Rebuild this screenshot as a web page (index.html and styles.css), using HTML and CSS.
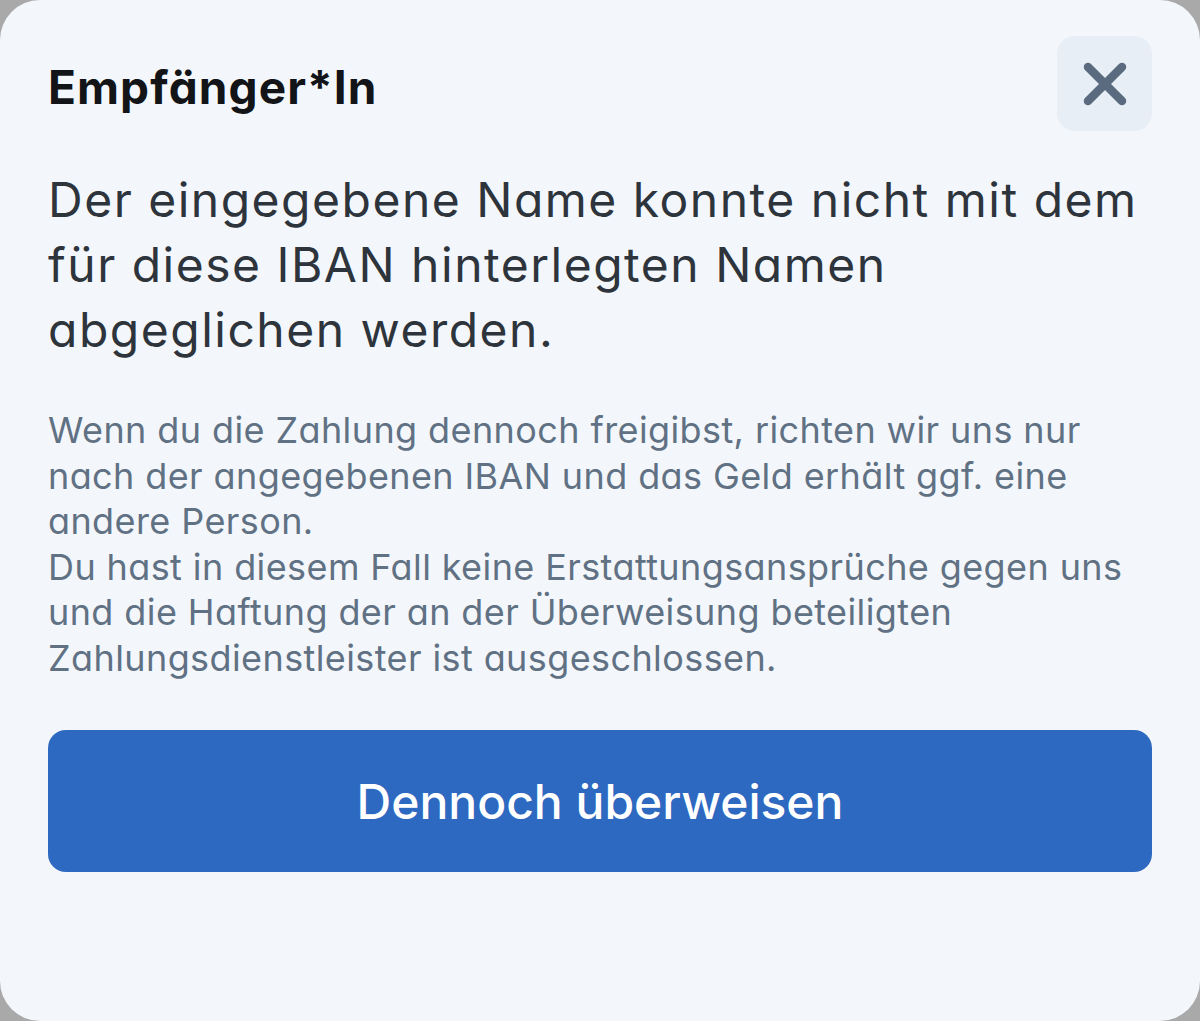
FILE: index.html
```html
<!DOCTYPE html>
<html lang="de">
<head>
<meta charset="utf-8">
<title>Empfänger*In</title>
<link rel="stylesheet" href="styles.css">
</head>
<body>
<div class="sheet">
  <header class="sheet-header">
    <h1 class="title">Empfänger*In</h1>
    <button class="close" aria-label="Schließen">
      <svg viewBox="0 0 46 46" width="46" height="46" aria-hidden="true">
        <path d="M6 6 L40 40 M40 6 L6 40" stroke="#5a6a7f" stroke-width="8.5" stroke-linecap="round" fill="none"/>
      </svg>
    </button>
  </header>
  <p class="lead">Der eingegebene Name konnte nicht mit dem<br>für diese IBAN hinterlegten Namen<br>abgeglichen werden.</p>
  <p class="note">Wenn du die Zahlung dennoch freigibst, richten wir uns nur<br>nach der angegebenen IBAN und das Geld erhält ggf. eine<br>andere Person.<br>Du hast in diesem Fall keine Erstattungsansprüche gegen uns<br>und die Haftung der an der Überweisung beteiligten<br>Zahlungsdienstleister ist ausgeschlossen.</p>
  <button class="primary">Dennoch überweisen</button>
</div>
</body>
</html>
```
FILE: styles.css
```css
html, body {
  margin: 0;
  padding: 0;
}
body {
  background: #a9a9a9;
  font-family: Inter, "Noto Sans", sans-serif;
  font-feature-settings: "cv11";
}
.sheet {
  box-sizing: border-box;
  height: 1021px;
  background: #f3f7fb;
  border-radius: 40px;
  padding: 36px 48px 0 48px;
  display: flex;
  flex-direction: column;
}
.sheet-header {
  display: flex;
  align-items: center;
  justify-content: space-between;
  height: 95px;
}
.title {
  margin: 6px 0 0 0;
  font-size: 46px;
  line-height: 1;
  font-weight: 700;
  color: #121417;
  letter-spacing: 1.1px;
}
.close {
  width: 95px;
  height: 95px;
  border: none;
  border-radius: 18px;
  background: #e8eef5;
  display: flex;
  align-items: center;
  justify-content: center;
  padding: 0;
}
.lead {
  margin: 36px 0 0 0;
  font-size: 48px;
  line-height: 65px;
  font-weight: 400;
  color: #2e343c;
  letter-spacing: 1.5px;
  white-space: nowrap;
}
.note {
  margin: 46px 0 0 0;
  font-size: 36px;
  line-height: 45.5px;
  font-weight: 400;
  color: #617184;
  letter-spacing: 0.4px;
  white-space: nowrap;
}
.primary {
  margin-top: 49px;
  height: 142px;
  border: none;
  border-radius: 18px;
  background: #2d68c1;
  color: #ffffff;
  font-family: Inter, "Noto Sans", sans-serif;
  font-feature-settings: "cv11";
  font-size: 48px;
  font-weight: 500;
}
```
